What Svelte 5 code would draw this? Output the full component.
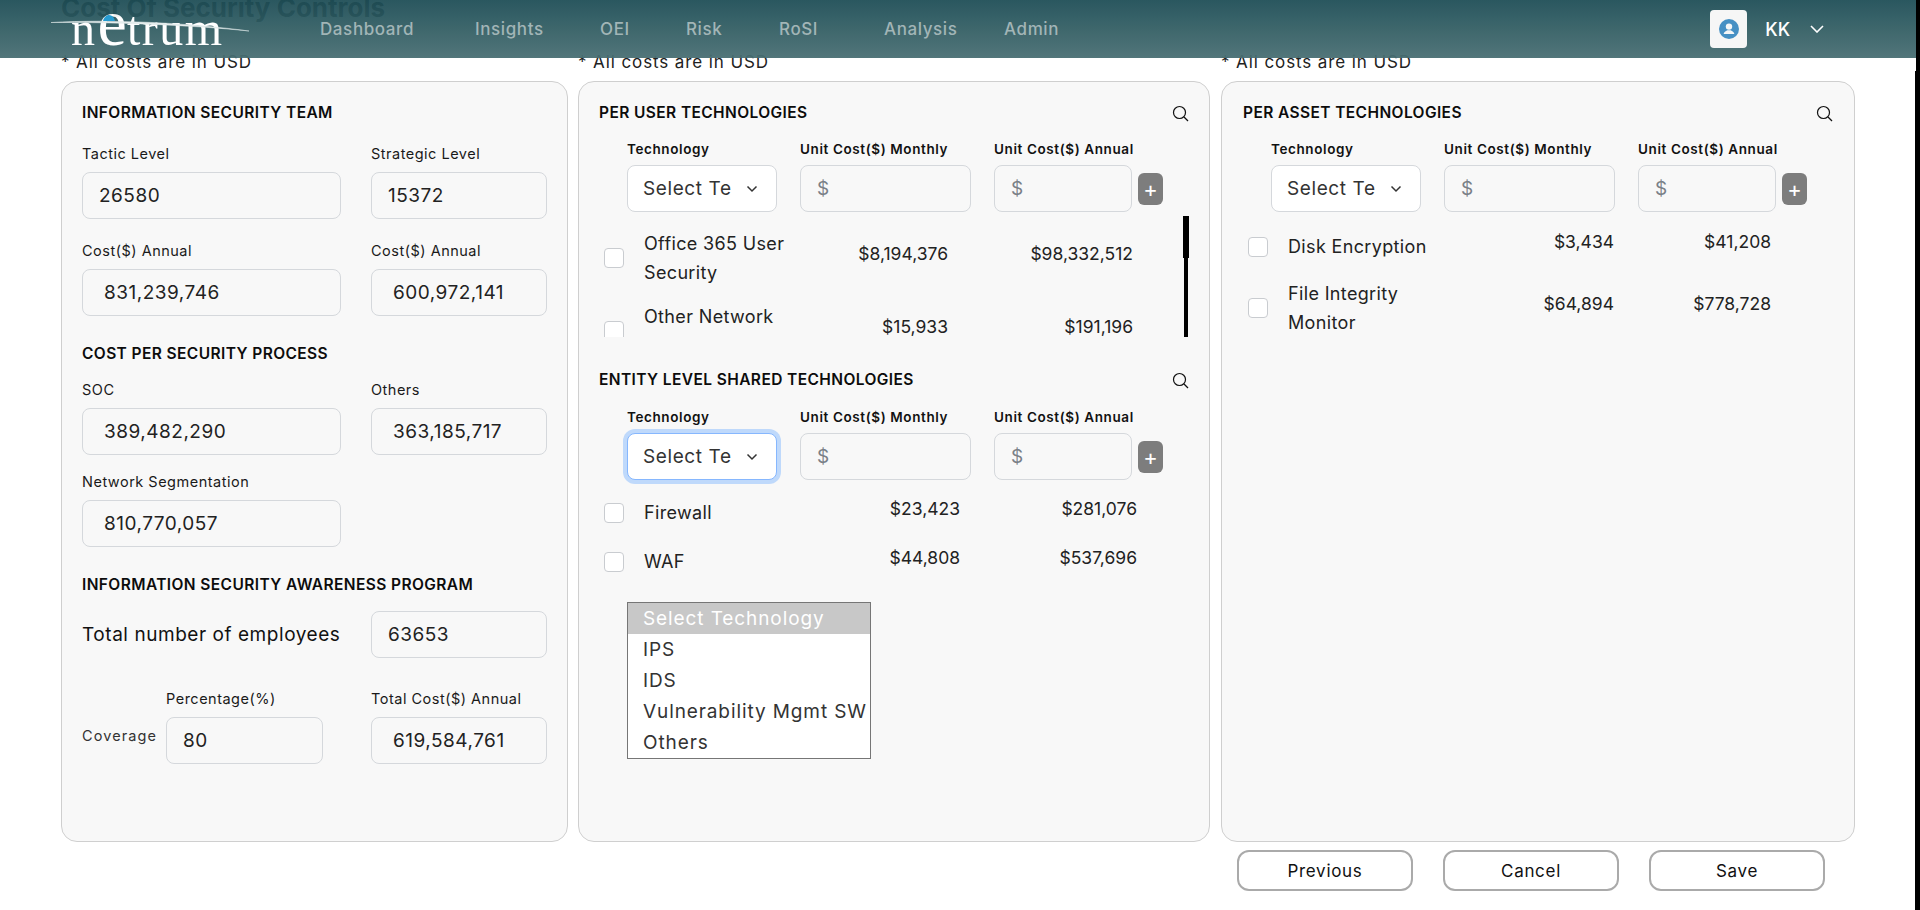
<script>
  const nav = ['Dashboard', 'Insights', 'OEI', 'Risk', 'RoSI', 'Analysis', 'Admin'];
  const options = ['Select Technology', 'IPS', 'IDS', 'Vulnerability Mgmt SW', 'Others'];

  const perUser = [
    { name: 'Office 365 User Security', monthly: '$8,194,376', annual: '$98,332,512' },
    { name: 'Other Network Technologies', monthly: '$15,933', annual: '$191,196' }
  ];
  const shared = [
    { name: 'Firewall', monthly: '$23,423', annual: '$281,076' },
    { name: 'WAF', monthly: '$44,808', annual: '$537,696' }
  ];
  const perAsset = [
    { name: 'Disk Encryption', monthly: '$3,434', annual: '$41,208' },
    { name: 'File Integrity Monitor', monthly: '$64,894', annual: '$778,728' }
  ];
</script>

{#snippet search()}
  <svg class="search" viewBox="0 0 17 17" aria-hidden="true">
    <circle cx="7.5" cy="7.5" r="6" />
    <path d="M12 12l4 4" />
  </svg>
{/snippet}

{#snippet addForm(focused, open)}
  <div class="add-form">
    <div class="tech-field">
      <span class="col-label">Technology</span>
      <div class="select-wrap" class:focused>
        <select>
          {#each options as option}
            <option>{option}</option>
          {/each}
        </select>
        <svg class="chev" viewBox="0 0 12 8" aria-hidden="true"><path d="M1.5 1.5L6 6l4.5-4.5" /></svg>
      </div>
      {#if open}
        <ul class="dropdown">
          {#each options as option, i}
            <li class:active={i === 0}>{option}</li>
          {/each}
        </ul>
      {/if}
    </div>
    <div>
      <span class="col-label">Unit Cost($) Monthly</span>
      <input class="box" placeholder="$" />
    </div>
    <div>
      <span class="col-label">Unit Cost($) Annual</span>
      <div class="annual">
        <input class="box" placeholder="$" />
        <button class="add">+</button>
      </div>
    </div>
  </div>
{/snippet}

{#snippet techRow(row)}
  <div class="tech-row">
    <input type="checkbox" />
    <span class="tech-name">{row.name}</span>
    <span class="amount">{row.monthly}</span>
    <span class="amount">{row.annual}</span>
  </div>
{/snippet}

<header class="topbar">
  <div class="logo">
    <span class="logo-n">n</span><span class="logo-e">e</span><span class="logo-rest">trum</span>
    <svg class="logo-art" viewBox="0 0 200 40" aria-hidden="true">
      <path class="swoosh" d="M0 12.5C60 9 140 13 198 21C140 15 60 12 0 12.5z" />
      <path class="cap" d="M52 11C53 6 57 5 58 5C61 5 63 7 64 11z" />
    </svg>
  </div>
  <nav class="nav">
    {#each nav as item}
      <span>{item}</span>
    {/each}
  </nav>
  <div class="user">
    <span class="avatar">
      <svg viewBox="0 0 20 20" aria-hidden="true">
        <circle cx="10" cy="10" r="10" fill="#3d8bc1" />
        <circle cx="10" cy="7.6" r="3.2" fill="#f4f6f7" />
        <path d="M4.6 15c.4-2.6 2.8-3.2 3.8-3.8h3.2c1 .6 3.4 1.2 3.8 3.8z" fill="#f4f6f7" />
      </svg>
    </span>
    <span class="user-name">KK</span>
    <svg class="user-chev" viewBox="0 0 14 8" aria-hidden="true"><path d="M1 1l6 6 6-6" /></svg>
  </div>
</header>

<div class="scroll-track"><div class="scroll-thumb"></div></div>

<main class="page">
  <h1 class="title">Cost Of Security Controls</h1>

  <div class="columns">
    <section class="col col-team">
      <p class="note">* All costs are in USD</p>
      <div class="panel">
        <h2>INFORMATION SECURITY TEAM</h2>
        <div class="pair-grid">
          <label>Tactic Level<input class="box value" value="26580" /></label>
          <label>Strategic Level<input class="box value" value="15372" /></label>
          <label>Cost($) Annual<input class="box value money" value="831,239,746" /></label>
          <label>Cost($) Annual<input class="box value money" value="600,972,141" /></label>
        </div>

        <h2 class="next">COST PER SECURITY PROCESS</h2>
        <div class="pair-grid tight">
          <label>SOC<input class="box value money" value="389,482,290" /></label>
          <label>Others<input class="box value money" value="363,185,717" /></label>
          <label>Network Segmentation<input class="box value money" value="810,770,057" /></label>
        </div>

        <h2 class="next">INFORMATION SECURITY AWARENESS PROGRAM</h2>
        <div class="employees">
          <span>Total number of employees</span>
          <input class="box value" value="63653" />
        </div>
        <div class="coverage">
          <span class="coverage-label">Coverage</span>
          <label>Percentage(%)<input class="box value" value="80" /></label>
          <label>Total Cost($) Annual<input class="box value money" value="619,584,761" /></label>
        </div>
      </div>
    </section>

    <section class="col col-user">
      <p class="note">* All costs are in USD</p>
      <div class="panel">
        <div class="panel-head"><h2>PER USER TECHNOLOGIES</h2>{@render search()}</div>
        {@render addForm(false, false)}
        <div class="list scrolling">
          {#each perUser as row}
            {@render techRow(row)}
          {/each}
          <div class="list-track"><div class="list-thumb"></div></div>
        </div>

        <div class="panel-head entity"><h2>ENTITY LEVEL SHARED TECHNOLOGIES</h2>{@render search()}</div>
        {@render addForm(true, true)}
        <div class="list shared">
          {#each shared as row}
            {@render techRow(row)}
          {/each}
        </div>
      </div>
    </section>

    <section class="col col-asset">
      <p class="note">* All costs are in USD</p>
      <div class="panel">
        <div class="panel-head"><h2>PER ASSET TECHNOLOGIES</h2>{@render search()}</div>
        {@render addForm(false, false)}
        <div class="list asset">
          {#each perAsset as row}
            {@render techRow(row)}
          {/each}
        </div>
      </div>
    </section>
  </div>

  <div class="actions">
    <button>Previous</button>
    <button>Cancel</button>
    <button>Save</button>
  </div>
</main>

<style>
  :global(body) {
    background: #fff;
    overflow: hidden;
    font-family: Inter, "Liberation Sans", sans-serif;
    color: #111;
  }

  /* header stays over the scrolled page */
  .topbar {
    position: fixed;
    top: 0;
    left: 0;
    width: 1916px;
    height: 58px;
    z-index: 5;
    display: flex;
    align-items: center;
    padding: 0 92px 0 51px;
    box-sizing: border-box;
    background: linear-gradient(180deg, #1f4f57, #496f73);
    opacity: 0.95;
  }

  .logo {
    position: relative;
    width: 269px;
    flex: none;
    display: flex;
    align-items: baseline;
    height: 58px;
    padding: 0 0 0 20px;
    box-sizing: border-box;
    font-family: "Liberation Serif", serif;
    color: #fff;
    line-height: 46px;
    font-size: 48px;
    letter-spacing: 1.4px;
  }

  .logo-e {
    font-size: 66px;
    line-height: 46px;
    margin: 0 -1px 0 1px;
  }

  .logo-art {
    position: absolute;
    left: 0;
    top: 10px;
    width: 200px;
    height: 40px;
  }

  .swoosh {
    fill: #e4ecec;
    stroke: #dfe8e8;
    stroke-width: 0.5;
  }

  .cap {
    fill: #1c97cf;
  }

  .nav {
    display: grid;
    grid-template-columns: 155px 125px 86px 93px 105px 120px auto;
    font-size: 17px;
    letter-spacing: 0.6px;
    font-weight: 500;
    color: #9db1b3;
  }

  .user {
    margin-left: auto;
    display: flex;
    align-items: center;
  }

  .avatar {
    width: 37px;
    height: 38px;
    background: #f6f6f6;
    border-radius: 4px;
    display: flex;
    align-items: center;
    justify-content: center;
  }

  .avatar svg {
    width: 20px;
    height: 20px;
  }

  .user-name {
    margin-left: 18px;
    font-size: 18px;
    font-weight: 500;
    color: #fff;
  }

  .user-chev {
    width: 14px;
    height: 8px;
    margin-left: 20px;
    fill: none;
    stroke: #fff;
    stroke-width: 1.6;
  }

  .scroll-track {
    position: fixed;
    top: 0;
    right: 0;
    bottom: 0;
    width: 4px;
    background: #000;
    z-index: 6;
  }

  .scroll-thumb {
    position: absolute;
    top: 71px;
    bottom: 0;
    right: 0;
    width: 5px;
    background: #000;
  }

  .page {
    padding: 0 65px 0 61px;
    height: 910px;
    box-sizing: border-box;
  }

  .title {
    margin: -12px 0 22px;
    font-size: 26px;
    line-height: 40px;
    font-weight: 700;
    color: #000;
  }

  .columns {
    display: flex;
    gap: 10px;
  }

  .col-team { width: 507px; }
  .col-user { width: 632px; }
  .col-asset { width: 634px; margin-left: 1px; }

  .note {
    margin: 0 0 7px;
    font-size: 17px;
    letter-spacing: 0.9px;
    line-height: 24px;
    color: #222;
  }

  .panel {
    height: 761px;
    box-sizing: border-box;
    padding: 20px 20px 0 20px;
    background: #f8f8f8;
    border: 1px solid #cfcfcf;
    border-radius: 16px;
  }

  .col-asset .panel {
    padding-left: 21px;
    padding-right: 21px;
  }

  h2 {
    margin: 0;
    font-size: 15.5px;
    letter-spacing: 0.4px;
    line-height: 22px;
    font-weight: 600;
    color: #0c0c0c;
  }

  h2.next {
    margin-top: 27px;
  }

  label,
  .col-label {
    display: block;
  }

  label {
    font-size: 14.5px;
    letter-spacing: 0.5px;
    line-height: 20px;
    color: #1a1a1a;
  }

  .box {
    display: block;
    width: 100%;
    height: 47px;
    box-sizing: border-box;
    padding: 0 16px;
    margin-top: 8px;
    background: #f8f8f8;
    border: 1px solid #d5d8dc;
    border-radius: 8px;
    font: inherit;
    font-size: 19px;
    letter-spacing: 0.5px;
    color: #222;
    outline: none;
  }

  .box::placeholder {
    color: #7a8087;
  }

  .money {
    padding-left: 21px;
  }

  .pair-grid {
    display: grid;
    grid-template-columns: 259px 176px;
    column-gap: 30px;
    row-gap: 22px;
    margin-top: 20px;
  }

  .pair-grid.tight {
    row-gap: 17px;
    margin-top: 15px;
  }

  .employees {
    display: grid;
    grid-template-columns: 289px 176px;
    align-items: center;
    margin-top: 15px;
    font-size: 19px;
    letter-spacing: 0.55px;
  }

  .employees .box {
    margin-top: 0;
  }

  .coverage {
    display: grid;
    grid-template-columns: 84px 157px 176px;
    align-items: end;
    margin-top: 31px;
  }

  .coverage label:last-child {
    margin-left: 48px;
    width: 176px;
  }

  .coverage-label {
    font-size: 14.5px;
    letter-spacing: 1.1px;
    line-height: 20px;
    padding-bottom: 18px;
    color: #333;
  }

  .panel-head {
    display: flex;
    justify-content: space-between;
    align-items: center;
  }

  .panel-head.entity {
    margin-top: 32px;
  }

  .search {
    width: 17px;
    height: 17px;
    fill: none;
    stroke: #111;
    stroke-width: 1.2;
  }

  .add-form {
    display: grid;
    grid-template-columns: 150px 171px 169px;
    column-gap: 23px;
    margin: 16px 0 0 28px;
  }

  .entity + .add-form {
    margin-top: 17px;
  }

  .col-label {
    font-size: 13.5px;
    letter-spacing: 0.6px;
    line-height: 18px;
    font-weight: 600;
    white-space: nowrap;
  }

  .add-form .box {
    margin-top: 7px;
    height: 47px;
  }

  .tech-field {
    position: relative;
  }

  .select-wrap {
    position: relative;
    margin-top: 7px;
    height: 47px;
    border: 1px solid #d5d8dc;
    border-radius: 8px;
    box-sizing: border-box;
    background: #fff;
  }

  .select-wrap.focused {
    border-color: #86b7fe;
    box-shadow: 0 0 0 4px #bfd9fb;
  }

  .select-wrap select {
    appearance: none;
    width: 100%;
    height: 100%;
    padding: 0 45px 0 15px;
    background: transparent;
    border: 0;
    outline: none;
    font: inherit;
    font-size: 19px;
    letter-spacing: 0.6px;
    color: #333;
  }

  .chev {
    position: absolute;
    right: 18px;
    top: 19px;
    width: 12px;
    height: 8px;
    fill: none;
    stroke: #333;
    stroke-width: 1.5;
    pointer-events: none;
  }

  .dropdown {
    position: absolute;
    left: 0;
    top: 194px;
    z-index: 2;
    width: 244px;
    margin: 0;
    padding: 0;
    box-sizing: border-box;
    list-style: none;
    background: #fff;
    border: 1px solid #767676;
    font-size: 19px;
    letter-spacing: 0.9px;
    line-height: 31px;
    color: #333;
  }

  .dropdown li {
    padding-left: 15px;
    white-space: nowrap;
  }

  .dropdown li.active {
    background: #c8c8c8;
    color: #fff;
  }

  .annual {
    display: flex;
    align-items: center;
    gap: 6px;
    margin-top: 7px;
  }

  .annual .box {
    width: 138px;
    margin-top: 0;
  }

  .add {
    width: 25px;
    height: 32px;
    padding: 0;
    border: 0;
    border-radius: 6px;
    background: #7d7d7d;
    color: #fff;
    font: inherit;
    font-size: 22px;
    line-height: 30px;
  }

  .list {
    position: relative;
    --amount-shift: 5px;
    --col-monthly: 138px;
    --col-annual: 185px;
  }

  .list.scrolling {
    height: 121px;
    margin-top: 4px;
    padding-top: 13px;
    box-sizing: border-box;
    overflow: hidden;
  }

  .list.shared {
    margin-top: 18px;
    --amount-shift: 4px;
    --col-monthly: 150px;
    --col-annual: 177px;
  }

  .list.asset {
    margin-top: 20px;
    --col-monthly: 160px;
    --col-annual: 157px;
  }

  .list-track {
    position: absolute;
    top: 0;
    bottom: 0;
    right: 1px;
    width: 4px;
    background: #000;
  }

  .list-thumb {
    position: absolute;
    top: 0;
    right: -1px;
    width: 6px;
    height: 42px;
    background: #000;
  }

  .tech-row {
    display: grid;
    grid-template-columns: 45px 166px var(--col-monthly) var(--col-annual);
    align-items: center;
    margin-bottom: 15px;
    font-size: 18px;
    letter-spacing: 0.35px;
    line-height: 29px;
    color: #222;
  }

  .shared .tech-row {
    margin-bottom: 20px;
  }

  .asset .tech-row {
    margin-bottom: 18px;
  }

  .tech-row input {
    appearance: none;
    width: 20px;
    height: 20px;
    margin: 0 0 0 5px;
    background: #fff;
    border: 1px solid #c9ccd0;
    border-radius: 4px;
  }

  /* amounts sit a little above the row's centre line */
  .amount {
    text-align: right;
    font-size: 17.5px;
    letter-spacing: 0;
    line-height: calc(29px - 2 * var(--amount-shift));
    padding-bottom: calc(2 * var(--amount-shift));
  }

  .actions {
    display: flex;
    justify-content: flex-end;
    gap: 30px;
    padding-right: 30px;
    margin-top: 8px;
  }

  .actions button {
    width: 176px;
    height: 41px;
    background: #fff;
    border: 2px solid #aaa;
    border-radius: 12px;
    font: inherit;
    font-size: 17px;
    letter-spacing: 0.7px;
    color: #111;
  }
</style>
